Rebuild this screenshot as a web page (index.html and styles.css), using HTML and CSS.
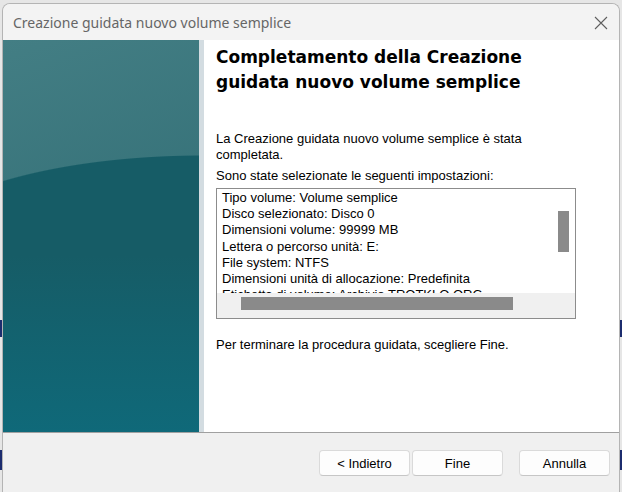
FILE: index.html
```html
<!DOCTYPE html>
<html lang="it">

<head>
    <meta charset="UTF-8">
    <meta name="viewport" content="width=device-width, initial-scale=1.0">
    <title>Creazione guidata nuovo volume semplice</title>
    <link rel="stylesheet" href="styles.css">
</head>

<body>

    <div class="window">
        <div class="titlebar">
            <span class="title">Creazione guidata nuovo volume semplice</span>
            <svg class="close" width="14" height="14" viewBox="0 0 14 14">
                <path d="M1 1 L13 13 M13 1 L1 13" stroke="#5f5f5f" stroke-width="1.1" fill="none" />
            </svg>
        </div>

        <div class="main">
            <div class="side"></div>

            <div class="content">
                <h1>Completamento della Creazione guidata nuovo volume semplice</h1>
                <p class="intro">La Creazione guidata nuovo volume semplice è stata completata.</p>
                <p class="label">Sono state selezionate le seguenti impostazioni:</p>

                <div class="list">
                    <div class="items">
                        <div>Tipo volume: Volume semplice</div>
                        <div>Disco selezionato: Disco 0</div>
                        <div>Dimensioni volume: 99999 MB</div>
                        <div>Lettera o percorso unità: E:</div>
                        <div>File system: NTFS</div>
                        <div>Dimensioni unità di allocazione: Predefinita</div>
                        <div>Etichetta di volume: Archivio TROTKLO ORG</div>
                    </div>
                    <div class="vscroll"><div class="thumb"></div></div>
                    <div class="hscroll"><div class="thumb"></div></div>
                </div>

                <p class="finish">Per terminare la procedura guidata, scegliere Fine.</p>
            </div>
        </div>

        <div class="footer">
            <button class="btn">&lt; Indietro</button>
            <button class="btn">Fine</button>
            <button class="btn cancel">Annulla</button>
        </div>
    </div>

</body>

</html>
```

FILE: styles.css
```css
* {
    margin: 0;
    padding: 0;
    box-sizing: border-box;
}

html,
body {
    width: 622px;
    height: 492px;
    overflow: hidden;
}

body {
    /* finestre dietro la procedura guidata */
    background: linear-gradient(to bottom,
            #e6e6e6 0 320px,
            #1c2c6e 320px 337px,
            #e6e6e6 337px 450px,
            #1c2c6e 450px 470px,
            #e6e6e6 470px);
    font-family: "Liberation Sans", Arial, sans-serif;
    font-size: 13px;
    color: #000;
}

.window {
    margin: 3px 0 0 2px;
    width: 618px;
    height: 489px;
    border: 1px solid #b4b4b4;
    border-bottom: none;
    border-radius: 8px 8px 0 0;
    background-color: #f0f0f0;
    overflow: hidden;
}

.titlebar {
    height: 36px;
    display: flex;
    align-items: center;
    justify-content: space-between;
    padding: 0 11px 0 10px;
    background-color: #f3f3f3;
}

.title {
    font-family: "Noto Sans", "Open Sans", sans-serif;
    font-size: 14px;
    color: #666;
}

.close {
    margin-top: 2px;
}

.main {
    display: flex;
    height: 393px;
    background-color: #fff;
    border-bottom: 1px solid #a0a0a0;
}

.side {
    width: 201px;
    flex-shrink: 0;
    border-right: 5px solid #d3dce1;
    background:
        linear-gradient(to bottom, transparent 0 215px, #165c66 215px, #0f6979 100%),
        radial-gradient(300px 100px at 200px 215px, #165c66 99%, transparent 100%),
        linear-gradient(160deg, #437e84 0%, #367279 50%, #2a6870 100%);
}

.content {
    flex: 1;
    padding: 5px 0 0 12px;
}

.content h1 {
    width: 360px;
    font-family: "DejaVu Sans", Verdana, sans-serif;
    font-size: 17px;
    line-height: 25px;
    font-weight: bold;
    color: #000;
}

.intro {
    width: 360px;
    margin-top: 36px;
    line-height: 16px;
}

.label {
    margin-top: 5px;
    line-height: 16px;
}

.list {
    width: 360px;
    height: 131px;
    margin-top: 4px;
    border: 1px solid #8c8c8c;
    display: grid;
    grid-template-columns: 1fr 22px;
    grid-template-rows: 1fr 25px;
    background-color: #fff;
}

.items {
    padding: 1px 0 0 5px;
    line-height: 16.2px;
    white-space: nowrap;
    overflow: hidden;
}

.vscroll {
    padding: 22px 0 0 5px;
}

.vscroll .thumb {
    width: 11px;
    height: 41px;
    background-color: #8a8a8a;
}

.hscroll {
    grid-column: 1 / 3;
    padding: 4px 0 0 24px;
    background-color: #f0f0f0;
}

.hscroll .thumb {
    width: 272px;
    height: 13px;
    background-color: #8a8a8a;
}

.finish {
    margin-top: 18px;
    line-height: 16px;
}

.footer {
    display: flex;
    justify-content: flex-end;
    gap: 2px;
    padding: 17px 9px 0 0;
}

.btn {
    width: 91px;
    height: 26px;
    border: 1px solid #dadada;
    border-bottom-color: #c6c6c6;
    border-radius: 4px;
    background-color: #fdfdfd;
    font-family: "Liberation Sans", Arial, sans-serif;
    font-size: 13px;
    color: #000;
}

.btn.cancel {
    margin-left: 14px;
}
```
